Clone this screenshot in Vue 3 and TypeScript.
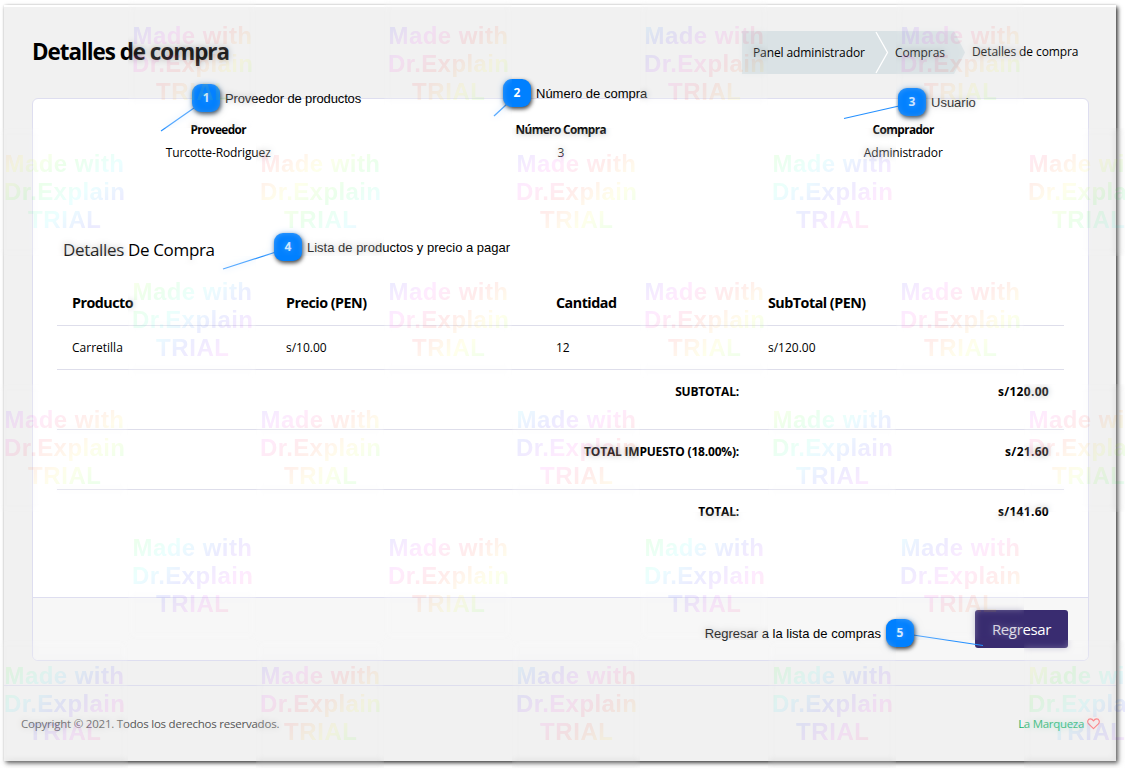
<script setup lang="ts">
interface Party { label: string; value: string }
interface Note { n: number; text: string; side: string }
interface Tile { x: number; y: number; hue: number }

const parties: Party[] = [
  { label: 'Proveedor', value: 'Turcotte-Rodriguez' },
  { label: 'Número Compra', value: '3' },
  { label: 'Comprador', value: 'Administrador' },
]

const rows = [{ product: 'Carretilla', price: 's/10.00', qty: '12', sub: 's/120.00' }]

const totals = [
  { label: 'SUBTOTAL:', value: 's/120.00' },
  { label: 'TOTAL IMPUESTO (18.00%):', value: 's/21.60' },
  { label: 'TOTAL:', value: 's/141.60' },
]

const notes: Note[] = [
  { n: 1, text: 'Proveedor de productos', side: 'right' },
  { n: 2, text: 'Número de compra', side: 'right' },
  { n: 3, text: 'Usuario', side: 'right' },
  { n: 4, text: 'Lista de productos y precio a pagar', side: 'right' },
  { n: 5, text: 'Regresar a la lista de compras', side: 'left' },
]

const hues: number[][] = [
  [240, 240, 200, 245],
  [30, 335, 245, 110, 325],
  [80, 240, 245, 245],
  [260, 255, 185, 75, 280],
  [115, 245, 115, 190],
  [110, 245, 195, 115, 60],
]
const tiles: Tile[] = hues.flatMap((line, r) =>
  line.map((hue, c) => ({ x: c * 256 + (r % 2 === 0 ? 128 : 0), y: r * 128, hue })),
)
const steps = [0, 1, 2, 3, 4, 5, 6, 7, 8]
const stopColor = (hue: number, i: number) => `hsl(${(hue + i * 30) % 360}, 100%, 50%)`
</script>

<template>
  <div class="stage">
    <div class="window">
      <header class="top">
        <h1>Detalles de compra</h1>
        <nav class="crumbs">
          <svg class="crumb-bg" width="226" height="43" viewBox="0 0 226 43">
            <path d="M0 0H212L223 21.5L212 43H0Z" fill="#dae2e5" />
            <path d="M134 1L145.5 21.5L134 42" fill="none" stroke="#fff" stroke-width="1.3" />
          </svg>
          <span class="c1">Panel administrador</span>
          <span class="c2">Compras</span>
          <span class="c3">Detalles de compra</span>
        </nav>
      </header>

      <main class="card">
        <section class="parties">
          <div v-for="p in parties" :key="p.label" class="party">
            <strong>{{ p.label }}</strong>
            <span>{{ p.value }}</span>
          </div>
        </section>
        <h2>Detalles De Compra</h2>
        <div class="table">
          <div class="row head">
            <span>Producto</span><span>Precio (PEN)</span><span>Cantidad</span><span>SubTotal (PEN)</span>
          </div>
          <div v-for="r in rows" :key="r.product" class="row">
            <span>{{ r.product }}</span><span>{{ r.price }}</span><span>{{ r.qty }}</span><span>{{ r.sub }}</span>
          </div>
          <div v-for="t in totals" :key="t.label" class="total">
            <span>{{ t.label }}</span><span class="amount">{{ t.value }}</span>
          </div>
        </div>
        <footer class="card-foot"><button type="button">Regresar</button></footer>
      </main>

      <footer class="foot">
        <span>Copyright © 2021. Todos los derechos reservados.</span>
        <span class="brand">La Marqueza
          <svg width="13" height="12" viewBox="0 0 13 12">
            <path d="M6.5 10.7L1.6 5.9C-.1 4 .8 .9 3.4 .9C4.9 .9 5.8 1.8 6.5 2.9C7.2 1.8 8.1 .9 9.6 .9C12.2 .9 13.1 4 11.4 5.9Z" fill="none" stroke="#ff6a70" stroke-width="1.15" stroke-linejoin="round" />
          </svg>
        </span>
      </footer>
    </div>

    <svg class="leaders" width="1125" height="770" viewBox="0 0 1125 770">
      <g stroke="#2590ff" stroke-width="1.2">
        <path d="M161 131L194 108" />
        <path d="M494 116L507 104" />
        <path d="M844 118.5L899 106" />
        <path d="M223 269L276 252" />
        <path d="M913 635L983 645.5" />
      </g>
    </svg>

    <div v-for="k in notes" :key="k.n" class="note" :class="['note-' + k.n, k.side]">
      <b>{{ k.n }}</b><span>{{ k.text }}</span>
    </div>

    <div class="marks">
      <div v-for="(t, i) in tiles" :key="'h' + i" class="soften" :style="{ left: t.x + 'px', top: t.y + 'px' }"></div>
      <svg width="1125" height="770" viewBox="0 0 1125 770">
        <defs>
          <linearGradient v-for="(t, i) in tiles" :id="'rainbow' + i" :key="i" gradientUnits="userSpaceOnUse" x1="4" y1="26" x2="85" y2="125">
            <stop v-for="s in steps" :key="s" :offset="s / 8" :stop-color="stopColor(t.hue, s)" />
          </linearGradient>
        </defs>
        <g v-for="(t, i) in tiles" :key="i" :transform="`translate(${t.x} ${t.y})`" :fill="`url(#rainbow${i})`" class="mark">
          <text x="4.5" y="44" textLength="119.5">Made with</text>
          <text x="4" y="72" textLength="121">Dr.Explain</text>
          <text x="28" y="100" textLength="73">TRIAL</text>
        </g>
      </svg>
    </div>
  </div>
</template>

<style>
body { margin: 0; background: #fff; }
</style>

<style scoped>
* { box-sizing: border-box; }
.stage {
  position: relative; width: 1125px; height: 770px; overflow: hidden; background: #fff; color: #000;
  font-family: "Open Sans", "Noto Sans", sans-serif; font-size: 12px;
}
.window {
  width: 1112px; height: 756px; margin-left: 4px; position: relative; top: 5px;
  background: #f1f1f1; border-top: 2px solid #fff;
  box-shadow: 2px 2px 4px rgba(0, 0, 0, .75), 0 0 2px rgba(0, 0, 0, .12);
  display: flex; flex-direction: column;
}
.top { height: 91px; display: flex; justify-content: space-between; padding: 0 37px 0 28px; }
h1 { margin: 28px 0 0; font-size: 22.4px; line-height: 34px; font-weight: 700; letter-spacing: -1.02px; white-space: nowrap; }
.crumbs { position: relative; width: 337px; height: 43px; margin-top: 24px; display: flex; line-height: 43px; white-space: nowrap; letter-spacing: -.1px; }
.crumb-bg { position: absolute; left: 0; top: 0; }
.crumbs span { position: relative; }
.c1 { width: 141px; padding-left: 11px; }
.c2 { width: 77px; padding-left: 12px; }
.c3 { padding-left: 12px; line-height: 41px; }
.card {
  width: 1057px; height: 563px; margin-left: 28px; background: #fff; border: 1px solid #dedef0; border-radius: 6px;
  display: flex; flex-direction: column; overflow: hidden;
}
.parties { display: grid; grid-template-columns: repeat(3, 342.5px); padding: 19px 0 0 14px; height: 136px; }
.party { display: flex; flex-direction: column; align-items: center; line-height: 23px; letter-spacing: -.12px; }
.party strong { font-size: 11.8px; letter-spacing: -.58px; }
h2 { margin: 0 0 0 30px; font-size: 17px; line-height: 30px; font-weight: 400; letter-spacing: -.34px; height: 43px; }
.table { width: 1007px; margin-left: 24px; }
.row { display: grid; grid-template-columns: 214px 270px 212px 1fr; padding-left: 15px; height: 44px; line-height: 43px; border-bottom: 1px solid #dedeeb; }
.row.head { height: 48px; line-height: 50px; font-size: 14.3px; font-weight: 700; letter-spacing: -.5px; }
.total { display: grid; grid-template-columns: 682px 310px; height: 60px; line-height: 43px; font-weight: 700; letter-spacing: -.2px; text-align: right; border-bottom: 1px solid #dedeeb; }
.amount { letter-spacing: .3px; }
.total:last-child { border-bottom: 0; }
.card-foot { margin-top: auto; height: 63px; flex: none; background: #f7f7f7; border-top: 1px solid #dedef0; padding: 12px 20px; display: flex; justify-content: flex-end; }
button { width: 93px; height: 38px; padding: 0; border: 0; border-radius: 3px; background: #392c70; color: #fff; font: inherit; font-size: 15px; letter-spacing: -.35px; line-height: 38px; }
.foot { margin-top: 24px; border-top: 1px solid #dedeee; height: 76px; padding: 27px 16px 0 17px; display: flex; justify-content: space-between; align-items: flex-start; line-height: 22px; font-size: 11.5px; letter-spacing: -.22px; color: #555; }
.brand { color: #19b36b; display: flex; gap: 3px; align-items: center; letter-spacing: -.3px; }
.leaders { position: absolute; left: 0; top: 0; }
.note { position: absolute; display: flex; align-items: center; gap: 5px; height: 28px; font: 13px/28px "Liberation Sans", Arial, sans-serif; white-space: nowrap; }
.note span { position: relative; top: 1px; }
.note.left { flex-direction: row-reverse; }
.note b { width: 28px; height: 28px; border-radius: 9px; background: #0080ff; color: #fff; text-align: center; font: 700 12px/28px "Open Sans", sans-serif; box-shadow: 1px 2px 4px rgba(0, 0, 0, .75); }
.note-1 { left: 192px; top: 84px; letter-spacing: -.12px; }
.note-2 { left: 503px; top: 79px; }
.note-3 { left: 898px; top: 88px; }
.note-4 { left: 274px; top: 233px; }
.note-5 { right: 211px; top: 619px; }
.marks { position: absolute; inset: 0; overflow: hidden; pointer-events: none; }
.marks svg { position: absolute; left: 0; top: 0; }
.soften { position: absolute; width: 128px; height: 128px; backdrop-filter: blur(3px); opacity: .27; }
.mark { font: 700 24px "Liberation Sans", Arial, sans-serif; opacity: .08; }
</style>
